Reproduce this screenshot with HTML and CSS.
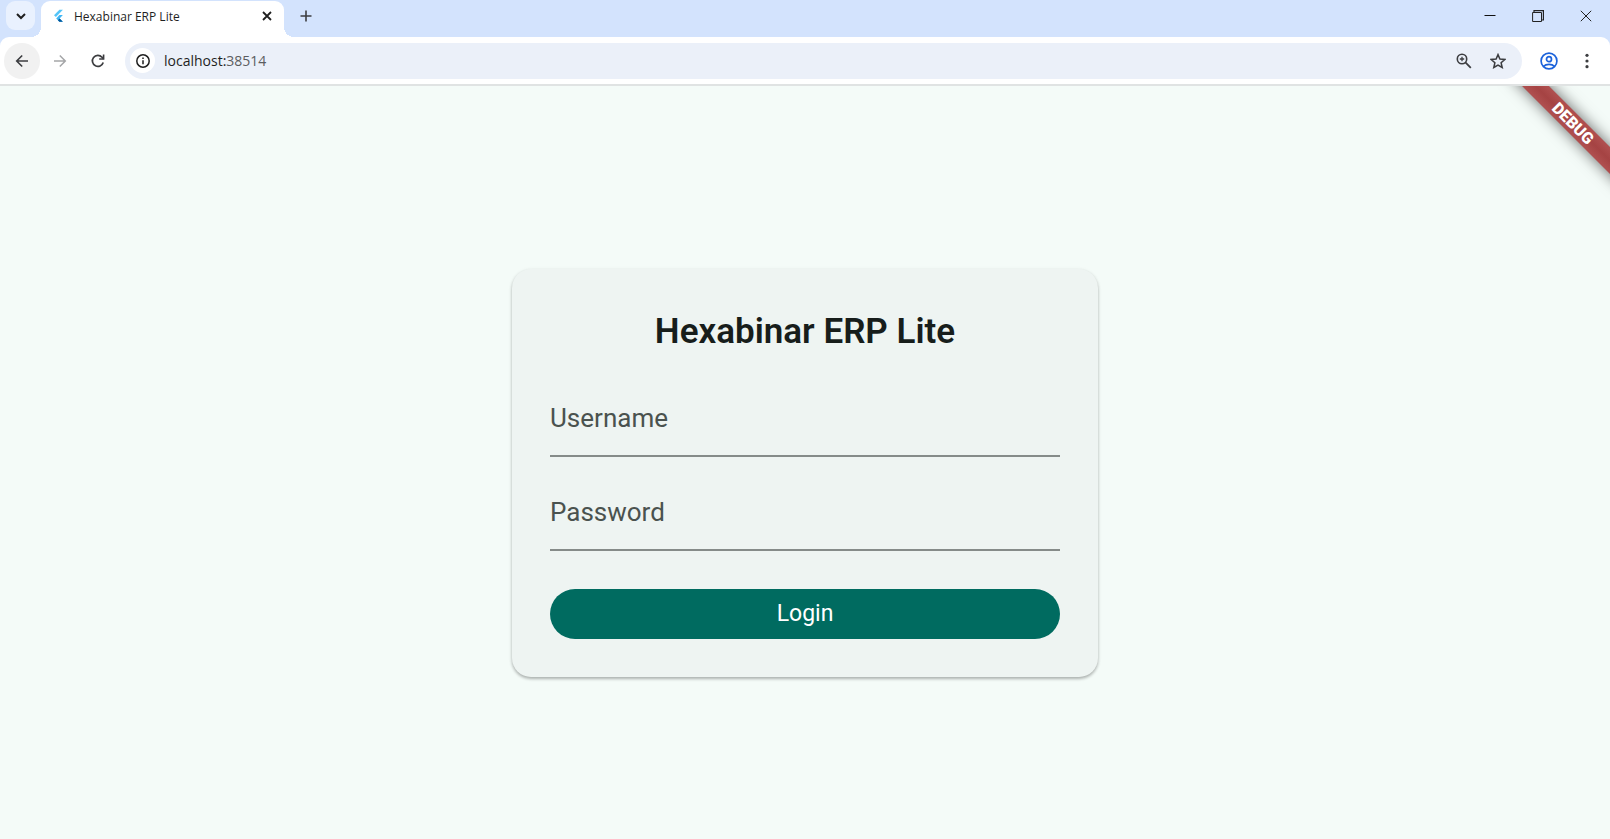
FILE: index.html
```html
<!DOCTYPE html>
<html lang="en">
<head>
<meta charset="utf-8">
<title>Hexabinar ERP Lite</title>
<link rel="stylesheet" href="styles.css">
</head>
<body>
<header class="browser">
  <div class="tab-strip">
    <button class="tab-search" aria-label="Search tabs">
      <svg width="12" height="12" viewBox="0 0 12 12"><path d="M2 4l4 4 4-4" fill="none" stroke="#1f1f1f" stroke-width="2"/></svg>
    </button>
    <div class="tab">
      <svg class="favicon" width="12" height="14" viewBox="0 0 12 14">
        <path d="M6.400 .8H9.900L2.900 8 1 6.200Z" fill="#54c5f8"/>
        <path d="M6.400 6H9.900L6.600 9.400 9.900 12.800H6.400L3.200 9.400Z" fill="#40b6f5"/>
        <path d="M4.900 11.200L6.600 9.400 9.900 12.800H6.400Z" fill="#01579b"/>
      </svg>
      <span class="tab-title">Hexabinar ERP Lite</span>
      <button class="tab-close" aria-label="Close tab">
        <svg width="10" height="10" viewBox="0 0 10 10"><path d="M1 1l8 8M9 1l-8 8" stroke="#1f1f1f" stroke-width="1.8"/></svg>
      </button>
    </div>
    <button class="new-tab" aria-label="New tab">
      <svg width="12" height="12" viewBox="0 0 12 12"><path d="M6 .5v11M.5 6h11" stroke="#3c3d40" stroke-width="1.6"/></svg>
    </button>
    <div class="window-controls">
      <button aria-label="Minimize"><svg width="12" height="12" viewBox="0 0 12 12"><path d="M.5 5.500h11" stroke="#111" stroke-width="1"/></svg></button>
      <button aria-label="Restore"><svg width="12" height="12" viewBox="0 0 12 12" fill="none" stroke="#222"><path d="M.6 2.500h8.900v9H.6z"/><path d="M2 2V.6h9.400v9.400H10" stroke-width="1.200"/></svg></button>
      <button aria-label="Close"><svg width="12" height="12" viewBox="0 0 12 12"><path d="M.8.8l10.400 10.400M11.200.8L.8 11.200" stroke="#222" stroke-width="1"/></svg></button>
    </div>
  </div>
  <div class="toolbar">
    <button class="nav back" aria-label="Back">
      <svg width="14" height="14" viewBox="0 0 14 14"><path d="M13 7H2M7.200 1.500L1.700 7l5.500 5.500" fill="none" stroke="#3c3d40" stroke-width="1.600"/></svg>
    </button>
    <button class="nav" aria-label="Forward">
      <svg width="14" height="14" viewBox="0 0 14 14"><path d="M1 7h11M6.800 1.500L12.300 7l-5.500 5.500" fill="none" stroke="#a5a6a8" stroke-width="1.500"/></svg>
    </button>
    <button class="nav" aria-label="Reload">
      <svg width="14" height="14" viewBox="0 0 14 14"><path d="M12.200 8.400A5.500 5.500 0 1 1 11 3.200L12.600 4.800" fill="none" stroke="#3c3d40" stroke-width="1.700"/><path d="M13.400.6v5.200H8.200V4.200h3.600V.6z" fill="#3c3d40"/></svg>
    </button>
    <div class="omnibox">
      <button class="site-info" aria-label="Site information">
        <svg width="14" height="14" viewBox="0 0 14 14"><circle cx="7" cy="7" r="6.200" fill="none" stroke="#1f1f1f" stroke-width="1.500"/><path d="M7 6.300v4M7 3.500v1.500" stroke="#1f1f1f" stroke-width="1.500"/></svg>
      </button>
      <span class="url">localhost:<span class="port">38514</span></span>
      <button class="omni-action" aria-label="Zoom">
        <svg width="16" height="16" viewBox="0 0 16 16" fill="none" stroke="#3c3d40"><circle cx="6" cy="6" r="4.700" stroke-width="1.600"/><path d="M9.400 9.400l5.400 5.400" stroke-width="1.800"/><path d="M6 3.800v4.400M3.800 6h4.400" stroke-width="1.300"/></svg>
      </button>
      <button class="omni-action" aria-label="Bookmark">
        <svg width="16" height="16" viewBox="0 0 16 16"><path d="M8 1.600l1.900 4.500 4.900.4-3.700 3.200 1.100 4.800L8 12l-4.200 2.500 1.100-4.800L1.200 6.500l4.900-.4z" fill="none" stroke="#3c3d40" stroke-width="1.500"/></svg>
      </button>
    </div>
    <button class="profile" aria-label="Profile">
      <svg width="18" height="18" viewBox="0 0 18 18" fill="none" stroke="#1b62db" stroke-width="1.700"><circle cx="9" cy="9" r="7.900"/><circle cx="9" cy="7.200" r="2.500"/><path d="M3.500 14.300c1.500-1.500 3.400-2 5.500-2s4 .5 5.500 2"/></svg>
    </button>
    <button class="menu" aria-label="Menu">
      <svg width="4" height="16" viewBox="0 0 4 16" fill="#3c3d40"><circle cx="2" cy="2.300" r="1.600"/><circle cx="2" cy="8" r="1.600"/><circle cx="2" cy="13.700" r="1.600"/></svg>
    </button>
  </div>
</header>
<main class="page">
  <div class="debug-banner">DEBUG</div>
  <form class="card">
    <h1 class="title">Hexabinar ERP Lite</h1>
    <input class="field" type="text" placeholder="Username" aria-label="Username">
    <input class="field" type="password" placeholder="Password" aria-label="Password">
    <button class="login" type="button">Login</button>
  </form>
</main>
</body>
</html>
```
FILE: styles.css
```css
* { box-sizing: border-box; }

body {
  margin: 0;
  min-height: 100vh;
  display: flex;
  flex-direction: column;
  font-family: Roboto, "Liberation Sans", sans-serif;
  background: #f4fbf8;
}

button {
  display: flex;
  align-items: center;
  justify-content: center;
  padding: 0;
  border: 0;
  background: none;
  font: inherit;
}

svg { display: block; flex: none; }

/* Browser frame */
.browser {
  background: #d3e3fd;
  font-family: "Open Sans", "Noto Sans", sans-serif;
}

.tab-strip {
  display: flex;
  height: 37px;
  padding-left: 6px;
}

.tab-search {
  width: 29px;
  height: 29px;
  margin: 1px 6px 0 0;
  border-radius: 9px;
  background: #e9f1fe;
}

.tab {
  position: relative;
  display: flex;
  align-items: center;
  width: 243px;
  height: 36px;
  margin-top: 1px;
  padding: 0 12px 6px 12px;
  border-radius: 9px 9px 0 0;
  background: #fff;
}

.tab::before,
.tab::after {
  content: "";
  position: absolute;
  bottom: 0;
  width: 10px;
  height: 10px;
}

.tab::before {
  right: 100%;
  background: radial-gradient(circle at 0 0, transparent 10px, #fff 10px);
}

.tab::after {
  left: 100%;
  background: radial-gradient(circle at 100% 0, transparent 10px, #fff 10px);
}

.tab-title {
  flex: 1;
  margin-left: 9px;
  font-size: 12px;
  color: #1f1f1f;
}

.new-tab {
  width: 28px;
  height: 31px;
  margin-left: 8px;
}

.window-controls {
  display: flex;
  margin-left: auto;
}

.window-controls button {
  width: 48px;
  height: 31px;
}

.toolbar {
  display: flex;
  align-items: center;
  height: 49px;
  padding: 0 13px 0 4px;
  border-bottom: 2px solid #e0e3e3;
  border-radius: 9px 9px 0 0;
  background: #fff;
}

.nav {
  width: 36px;
  height: 36px;
  margin-right: 2px;
  border-radius: 50%;
}

.back { background: #f1f1f1; }

.omnibox {
  display: flex;
  flex: 1;
  align-items: center;
  height: 36px;
  margin-left: 7px;
  padding: 0 12px 0 5px;
  border-radius: 18px;
  background: #ebf0f9;
}

.site-info {
  width: 25px;
  height: 25px;
  border-radius: 50%;
  background: #fff;
}

.url {
  flex: 1;
  margin-left: 9px;
  font-size: 14px;
  color: #1f1f1f;
}

.port { color: #5b5d60; }

.omni-action {
  width: 24px;
  height: 24px;
  margin-left: 10px;
}

.profile {
  width: 30px;
  height: 30px;
  margin-left: 12px;
}

.menu {
  width: 20px;
  height: 30px;
  margin-left: 13px;
}

/* Login page */
.page {
  position: relative;
  display: flex;
  flex: 1;
  align-items: center;
  justify-content: center;
  padding-top: 20px;
  overflow: hidden;
}

.debug-banner {
  position: absolute;
  top: 28px;
  right: -43px;
  width: 160px;
  transform: rotate(45deg);
  background: linear-gradient(#b05050, #a54343 50%, #b05050);
  box-shadow: 0 0 15px rgba(0, 0, 0, 0.6);
  font-size: 16px;
  font-weight: 900;
  line-height: 19px;
  text-align: center;
  color: #fff;
}

.card {
  display: flex;
  flex-direction: column;
  width: 100%;
  max-width: 586px;
  padding: 38px;
  border-radius: 19px;
  background: #eef4f2;
  box-shadow: 0 2px 3px rgba(0, 0, 0, 0.25), 0 1px 4px rgba(0, 0, 0, 0.08);
}

.title {
  margin: 0 0 25px;
  font-size: 35px;
  font-weight: 600;
  line-height: 50px;
  text-align: center;
  color: #171d1b;
}

.field {
  width: 100%;
  height: 75px;
  margin-bottom: 19px;
  padding: 0;
  border: 0;
  border-bottom: 2px solid #858b89;
  border-radius: 0;
  outline: 0;
  background: none;
  font-family: inherit;
  font-size: 26px;
  color: #171d1b;
}

.field::placeholder {
  color: #4a524f;
  opacity: 1;
}

.login {
  height: 50px;
  margin-top: 19px;
  border-radius: 25px;
  background: #006b60;
  font-size: 23px;
  font-weight: 400;
  color: #fff;
}
```
